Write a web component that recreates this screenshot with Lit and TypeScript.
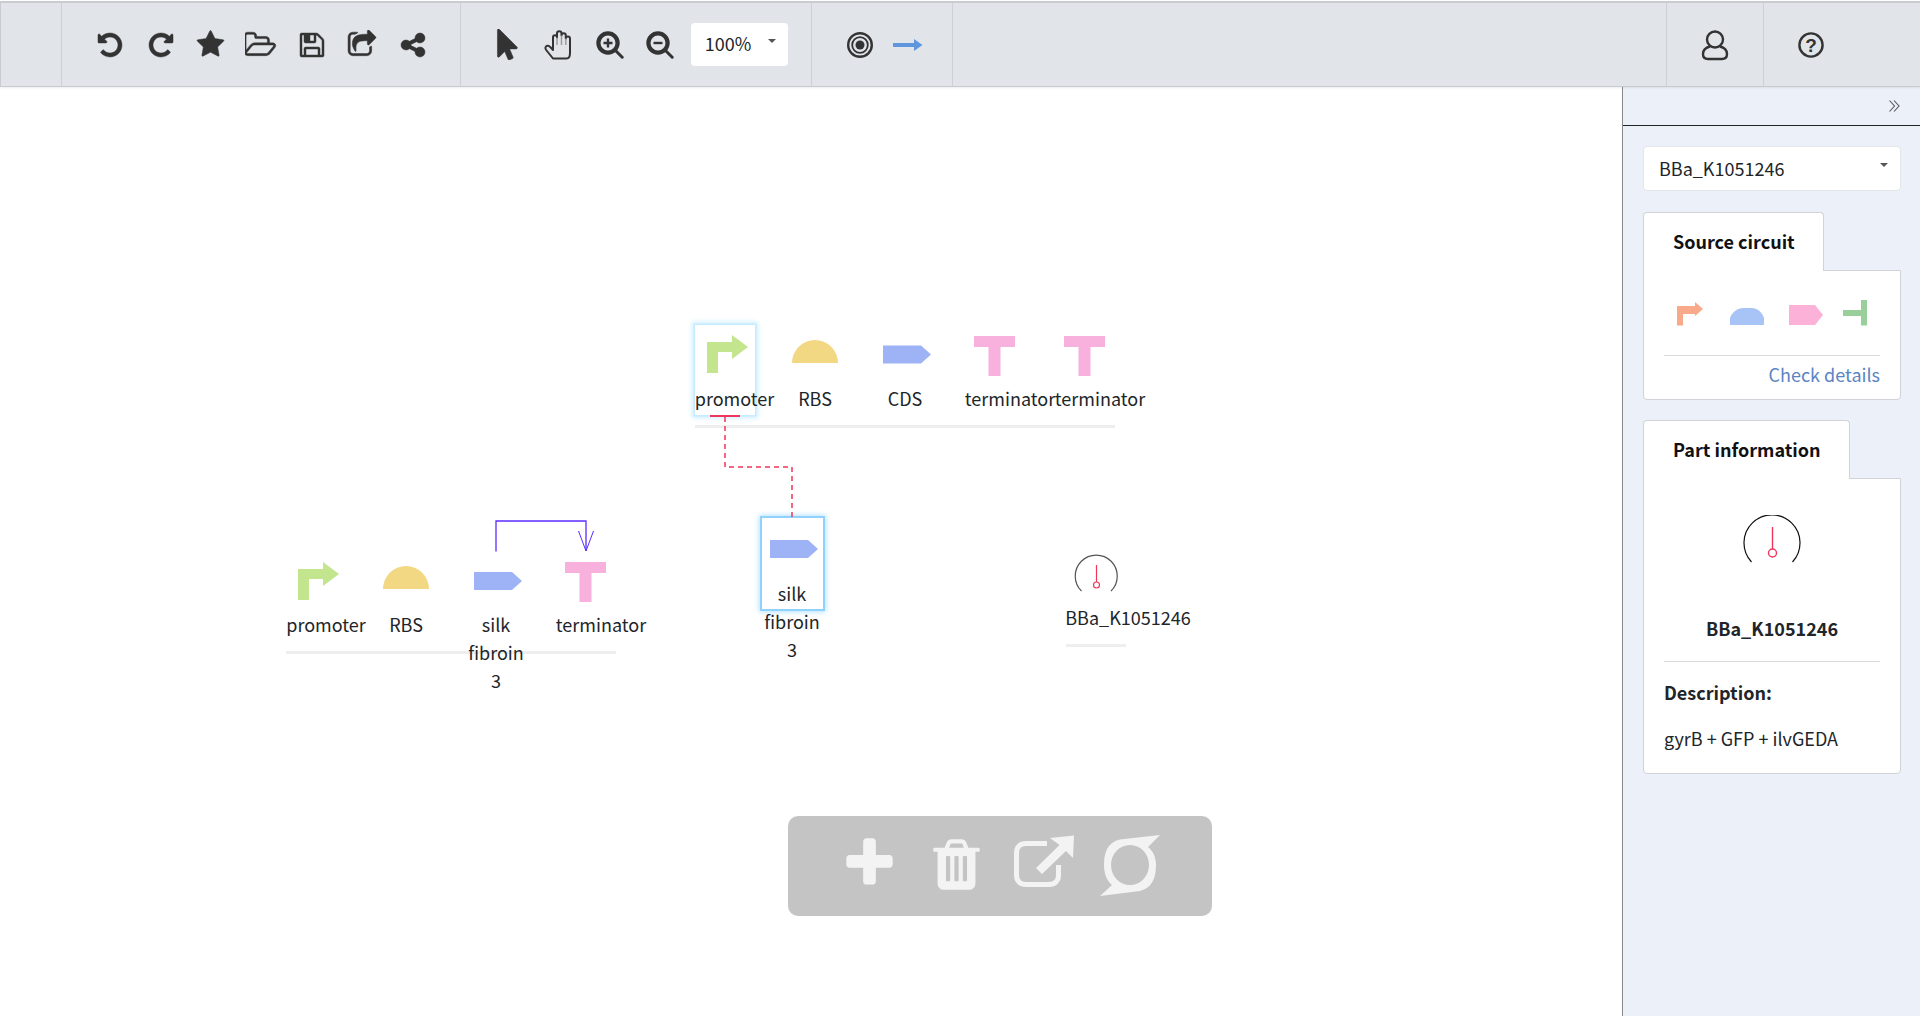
import { LitElement, html, css, svg } from "lit";
import { customElement } from "lit/decorators.js";

const FA = {
  undo: "M1664 896q0 156-61 298t-164 245-245 164-298 61q-172 0-327-72.5t-264-204.5q-9-13-8.5-23.5t9.5-20.5l137-138q10-9 25-9 16 2 23 12 73 95 179 147t225 52q104 0 198.5-40.5t163.5-109.5 109.5-163.5 40.5-198.5-40.5-198.5-109.5-163.5-163.5-109.5-198.5-40.5q-98 0-188 35.5t-160 101.5l137 138q31 30 14 69-17 40-59 40h-448q-26 0-45-19t-19-45v-448q0-42 40-59 39-17 69 14l130 129q107-101 244-156.5t284-55.5q156 0 298 61t245 164 164 245 61 298z",
  star: "M1728 647q0 22-26 48l-363 354 86 500q1 7 1 20 0 21-10.5 35.5t-30.5 14.5q-19 0-40-12l-449-236-449 236q-22 12-40 12-21 0-31.5-14.5t-10.5-35.5q0-6 2-20l86-500-364-354q-25-27-25-48 0-37 56-46l502-73 225-455q19-41 49-41t49 41l225 455 502 73q56 9 56 46z",
  folder: "M1717 931q0-35-53-35h-1088q-40 0-85.5 21.5t-71.5 52.5l-294 363q-18 24-18 40 0 35 53 35h1088q40 0 86-22t71-53l294-363q18-22 18-39zm-1141-163h768v-160q0-40-28-68t-68-28h-576q-40 0-68-28t-28-68v-64q0-40-28-68t-68-28h-320q-40 0-68 28t-28 68v853l256-315q44-53 116-87.5t140-34.5zm1269 163q0 62-46 120l-295 363q-43 53-116 87.5t-140 34.5h-1088q-92 0-158-66t-66-158v-960q0-92 66-158t158-66h320q92 0 158 66t66 158v32h544q92 0 158 66t66 158v160h192q54 0 99 24.5t67 70.5q15 32 15 68z",
  save: "M512 1536h768v-384h-768v384zm896 0h128v-896q0-14-10-38.5t-20-34.5l-281-281q-10-10-34-20t-39-10v416q0 40-28 68t-68 28h-576q-40 0-68-28t-28-68v-416h-128v1280h128v-416q0-40 28-68t68-28h832q40 0 68 28t28 68v416zm-384-928v-320q0-13-9.5-22.5t-22.5-9.5h-192q-13 0-22.5 9.5t-9.5 22.5v320q0 13 9.5 22.5t22.5 9.5h192q13 0 22.5-9.5t9.5-22.5zm640 32v928q0 40-28 68t-68 28h-1344q-40 0-68-28t-28-68v-1344q0-40 28-68t68-28h928q40 0 88 20t76 48l280 280q28 28 48 76t20 88z",
  share: "M1472 989v259q0 119-84.5 203.5t-203.5 84.5h-832q-119 0-203.5-84.5t-84.5-203.5v-832q0-119 84.5-203.5t203.5-84.5h255q13 0 22.5 9.5t9.5 22.5q0 27-26 32-77 26-133 60-10 4-16 4h-112q-66 0-113 47t-47 113v832q0 66 47 113t113 47h832q66 0 113-47t47-113v-214q0-19 18-29 28-13 54-37 16-16 35-8 21 9 21 29zm237-496l-384 384q-18 19-45 19-12 0-25-5-39-17-39-59v-192h-160q-323 0-438 131-119 137-74 473 3 23-20 34-8 2-12 2-16 0-26-13-10-14-21-31t-39.5-68.5-49.5-99.5-38.5-114-17.5-122q0-49 3.5-91t14-90 28-88 47-81.5 68.5-74 94.5-61.5 124.5-48.5 159.5-30.5 196.5-11h160v-192q0-42 39-59 13-5 25-5 26 0 45 19l384 384q19 19 19 45t-19 45z",
  shareAlt: "M1344 1024q133 0 226.5 93.5t93.5 226.5-93.5 226.5-226.5 93.5-226.5-93.5-93.5-226.5q0-12 2-34l-360-180q-92 86-218 86-133 0-226.5-93.5t-93.5-226.5 93.5-226.5 226.5-93.5q126 0 218 86l360-180q-2-22-2-34 0-133 93.5-226.5t226.5-93.5 226.5 93.5 93.5 226.5-93.5 226.5-226.5 93.5q-126 0-218-86l-360 180q2 22 2 34t-2 34l360 180q92-86 218-86z",
  pointer: "M1389 1043q31 30 14 69-17 40-59 40h-382l201 476q10 25 0 49t-34 35l-177 75q-25 10-49 0t-35-34l-191-452-312 312q-19 19-45 19-12 0-24-5-40-17-40-59v-1504q0-42 40-59 12-5 24-5 27 0 45 19z",
  trash: "M704 1376v-704q0-14-9-23t-23-9h-64q-14 0-23 9t-9 23v704q0 14 9 23t23 9h64q14 0 23-9t9-23zm256 0v-704q0-14-9-23t-23-9h-64q-14 0-23 9t-9 23v704q0 14 9 23t23 9h64q14 0 23-9t9-23zm256 0v-704q0-14-9-23t-23-9h-64q-14 0-23 9t-9 23v704q0 14 9 23t23 9h64q14 0 23-9t9-23zm-544-992h448l-48-117q-7-9-17-11h-317q-10 2-17 11zm928 32v64q0 14-9 23t-23 9h-96v948q0 83-47 143.5t-113 60.5h-832q-66 0-113-58.5t-47-141.5v-952h-96q-14 0-23-9t-9-23v-64q0-14 9-23t23-9h309l70-167q15-37 54-63t79-26h320q40 0 79 26t54 63l70 167h309q14 0 23 9t9 23z",
  plus: "M1600 736v192q0 40-28 68t-68 28h-416v416q0 40-28 68t-68 28h-192q-40 0-68-28t-28-68v-416h-416q-40 0-68-28t-28-68v-192q0-40 28-68t68-28h416v-416q0-40 28-68t68-28h192q40 0 68 28t28 68v416h416q40 0 68 28t28 68z",
};

const fa = (d: string, w: number, h: number, mirror = false, vb = "0 0 1792 1792") =>
  html`<svg class="ic ${mirror ? "flip" : ""}" width=${w} height=${h} viewBox=${vb}><path d=${d} fill="#333" stroke="#333" stroke-width="30"/></svg>`;

const zoomIcon = (plus: boolean) => html`<svg class="ic" width="28" height="28" viewBox="0 0 28 28" fill="none" stroke="#333">
  <circle cx="12" cy="12" r="9.6" stroke-width="4.2"/>
  <path d="M19 19l7.2 7.2" stroke-width="3" stroke-linecap="round"/>
  <path d=${plus ? "M7.5 12h9M12 7.5v9" : "M7.5 12h9"} stroke-width="2.4"/></svg>`;

const handIcon = html`<svg class="ic" width="30" height="32" viewBox="0 0 30 32" fill="none" stroke="#333" stroke-width="2" stroke-linejoin="round">
  <path d="M9 29.5 2.2 21c-1.6-2-.4-3.900 1-4.200 1.300-.3 2.400.4 3.300 1.500L9 21V8.500c0-3 4-3 4 0V4.500c0-3 4.500-3 4.500 0v2c0-3 4.300-3 4.300 0v3c0-2.800 4.200-2.800 4.200 0V24c0 3-1 5.500-3.500 5.500z"/>
  <path d="M13 8.500V16M17.500 6.500V16M21.800 9.500V16" stroke="#999" stroke-width="1.400"/></svg>`;

const targetIcon = html`<svg class="ic" width="28" height="28" viewBox="0 0 28 28" fill="none" stroke="#333">
  <circle cx="14" cy="14" r="11.800" stroke-width="2.400"/><circle cx="14" cy="14" r="7.800" stroke-width="1.800"/><circle cx="14" cy="14" r="4.500" fill="#333" stroke="none"/></svg>`;

const blueArrow = html`<svg class="ic" width="30" height="14" viewBox="0 0 30 14"><path d="M0 5h21V1l8.500 6-8.500 6V9H0z" fill="#5f97de"/></svg>`;

const userIcon = html`<svg class="ic" width="28" height="32" viewBox="0 0 28 32" fill="none" stroke="#333" stroke-width="2.400">
  <circle cx="14" cy="10.500" r="8"/><path d="M9 17.500C5 18.500 2 21 2 25c0 3 2 5 5 5h14c3 0 5-2 5-5 0-4-3-6.500-7-7.500"/></svg>`;

const helpIcon = html`<svg class="ic" width="28" height="28" viewBox="0 0 28 28" fill="none">
  <circle cx="14" cy="14" r="11.600" stroke="#333" stroke-width="2.400"/>
  <text x="14" y="20.500" text-anchor="middle" class="qm">?</text></svg>`;

const T = (x: number, y: number) =>
  svg`<path d="M${x} ${y}h41v11h-14.500v29h-12v-29h-14.500z" fill="#f8b0dd"/>`;
const promoter = (x: number, y: number) =>
  svg`<path d="M${x} ${y + 38}v-31h25v-7l16 12-16 12v-7h-14v21z" fill="#c3e58e"/>`;
const rbs = (x: number, y: number) =>
  svg`<path d="M${x} ${y + 23}a23 23 0 0 1 46 0z" fill="#f3d883"/>`;
const cds = (x: number, y: number) =>
  svg`<path d="M${x} ${y}h38l10 9-10 9h-38z" fill="#9db3f5"/>`;

const canvasLabels = [
  { t: "promoter", x: 734.5, y: 398 },
  { t: "RBS", x: 815, y: 398 },
  { t: "CDS", x: 905, y: 398 },
  { t: "terminator", x: 1010, y: 398 },
  { t: "terminator", x: 1100, y: 398 },
  { t: "promoter", x: 326, y: 624 },
  { t: "RBS", x: 406, y: 624 },
  { t: "silk fibroin 3", x: 496, y: 624, wrap: true },
  { t: "terminator", x: 601, y: 624 },
  { t: "silk fibroin 3", x: 792, y: 593, wrap: true },
  { t: "BBa_K1051246", x: 1128, y: 617 },
];

@customElement("app-root")
export class AppRoot extends LitElement {
  static styles = css`
    :host { display: block; width: 1920px; height: 1016px; overflow: hidden; position: relative;
      font-family: "Noto Sans CJK SC", "Noto Sans", sans-serif; font-size: 18px; color: #212529; background: #fff; }
    * { box-sizing: border-box; }
    .ic { display: block; flex: none; }
    .flip { transform: scaleX(-1); }
    .qm { font: bold 19px "Liberation Sans", sans-serif; fill: #333; }
    .toolbar { display: flex; height: 86px; margin-top: 1px; background: #e1e5e9; border: 1px solid #c8ccd1; border-width: 2px 0 1.500px 1px; box-shadow: 0 1px 2px rgba(0,0,0,.08); position: relative; z-index: 2; }
    .sec { display: flex; align-items: center; border-right: 1px solid #cdd1d6; height: 100%; flex: none; }
    .s1 { width: 61px; }
    .s2 { width: 399px; padding-left: 23px; }
    .s3 { width: 351px; padding-left: 22px; }
    .s4 { width: 141px; padding-left: 34px; gap: 19px; }
    .spacer { flex: 1; border-right: 1px solid #cdd1d6; height: 100%; }
    .s5 { width: 97px; justify-content: center; }
    .s6 { width: 156px; padding-left: 33px; border-right: 0; }
    .cell { width: 50.700px; display: flex; justify-content: center; align-items: center; }
    .s2 .cell { width: 50.400px; }
    .sel { position: relative; background: #fff; border-radius: 4px; }
    .sel::after { content: ""; position: absolute; border: 4.500px solid transparent; border-top-color: #555; border-bottom: 0; }
    .zoomsel { width: 97px; height: 43px; margin-left: 5px; padding-left: 14px; line-height: 41px; font-size: 18px; }
    .zoomsel::after { right: 12px; top: 16px; }
    .main { display: flex; height: 929px; }
    .canvas { width: 1622px; position: relative; overflow: hidden; }
    .canvas-svg { position: absolute; left: 0; top: 0; }
    .box { position: absolute; background: #fff; }
    .box.a { left: 695px; top: 238px; width: 60px; height: 90px; box-shadow: 0 0 0 1.500px #c8ecff, 0 0 5px 3px #cdeeff; }
    .box.b { left: 762px; top: 431px; width: 61px; height: 91px; box-shadow: 0 0 0 2px #8fd2fb, 0 0 5px 3px #b4e2fd; }
    .lbl { position: absolute; transform: translateX(-50%); line-height: 28px; white-space: nowrap; text-align: center; }
    .lbl.wrap { width: 62px; white-space: normal; }
    .float { position: absolute; left: 788px; top: 729px; width: 424px; height: 100px; border-radius: 10px; background: #c4c4c4; }
    .side { width: 298px; background: #ebf0f9; border-left: 1px solid #888; display: flex; flex-direction: column; }
    .side-head { height: 39px; border-bottom: 1px solid #222; display: flex; justify-content: flex-end; align-items: center; padding: 0 20px 0 0; flex: none; }
    .side-body { padding: 20px 19px 0 20px; display: flex; flex-direction: column; }
    .picker { height: 45px; line-height: 42px; padding-left: 15px; border: 1px solid #e3e6ea; font-size: 18px; }
    .picker::after { right: 12px; top: 16px; }
    .card { display: flex; flex-direction: column; align-items: flex-start; }
    .tab { background: #fff; border: 1px solid #d0d3d8; border-bottom: 0; border-radius: 4px 4px 0 0; height: 59px; margin-bottom: -1px; padding: 0 0 0 29px; line-height: 57px; font-weight: 700; color: #111; position: relative; z-index: 1; white-space: nowrap; }
    .body { width: 100%; background: #fff; border: 1px solid #d0d3d8; border-radius: 0 0 4px 4px; padding: 0 20px; }
    .c1 { margin-top: 21px; }
    .c1 .tab { width: 181px; }
    .c1 .body { height: 130px; }
    .c2 { margin-top: 20px; }
    .c2 .tab { width: 207px; }
    .c2 .body { height: 296px; }
    .glyphs { display: flex; height: 84px; margin: 0 -7px; padding-top: 29px; }
    .rule { height: 1px; background: #d9dbdf; }
    .link { color: #5b84c4; text-align: right; line-height: 28px; margin-top: 4px; }
    .gauge { display: flex; justify-content: center; padding-top: 36px; height: 135px; }
    .pname { font-weight: 700; text-align: center; line-height: 28px; height: 47px; }
    .h { font-weight: 700; line-height: 28px; margin-top: 16px; }
    .desc { line-height: 28px; margin-top: 18px; }
  `;

  render() {
    return html`
      <div class="toolbar">
        <div class="sec s1"></div>
        <div class="sec s2">
          <div class="cell">${fa(FA.undo, 28, 28)}</div>
          <div class="cell">${fa(FA.undo, 28, 28, true)}</div>
          <div class="cell">${fa(FA.star, 29, 29)}</div>
          <div class="cell">${fa(FA.folder, 32, 30, false, "0 0 1920 1792")}</div>
          <div class="cell">${fa(FA.save, 28, 28)}</div>
          <div class="cell">${fa(FA.share, 30, 30)}</div>
          <div class="cell">${fa(FA.shareAlt, 28, 28)}</div>
        </div>
        <div class="sec s3">
          <div class="cell">${fa(FA.pointer, 31, 31)}</div>
          <div class="cell">${handIcon}</div>
          <div class="cell">${zoomIcon(true)}</div>
          <div class="cell">${zoomIcon(false)}</div>
          <div class="sel zoomsel">100%</div>
        </div>
        <div class="sec s4">${targetIcon}${blueArrow}</div>
        <div class="spacer"></div>
        <div class="sec s5">${userIcon}</div>
        <div class="sec s6">${helpIcon}</div>
      </div>
      <div class="main">
        <div class="canvas">
          <div class="box a"></div>
          <div class="box b"></div>
          <svg class="canvas-svg" width="1622" height="929" viewBox="0 87 1622 929" fill="none">
            ${promoter(707, 335)}${rbs(792, 340)}${cds(883, 345.5)}${T(974, 336)}${T(1064, 336)}
            <rect x="695" y="425" width="420" height="3" fill="#eee"/>
            <rect x="710" y="415" width="30" height="2" fill="#f2355b"/>
            <path d="M725 417V467H792V518" stroke="#f2355b" stroke-width="1.500" stroke-dasharray="5 4"/>
            ${promoter(298, 562)}${rbs(383, 566)}${cds(474, 572)}${T(565, 562)}
            <rect x="286" y="651" width="330" height="3" fill="#eee"/>
            <path d="M496 551.500V521H586V551" stroke="#5b2cff" stroke-width="1.300"/>
            <path d="M578.500 531 586 551 593.500 531" stroke="#5b2cff" stroke-width="1"/>
            ${cds(770, 540)}
            <path d="M1081.500 591A21 21 0 1 1 1111 591" stroke="#555" stroke-width="1.200"/>
            <path d="M1096.500 565V582" stroke="#f2355b" stroke-width="1.200"/>
            <circle cx="1096.500" cy="585" r="3" stroke="#f2355b" stroke-width="1.200"/>
            <rect x="1066" y="644" width="60" height="3" fill="#eee"/>
          </svg>
          ${canvasLabels.map(
            (l) => html`<div class="lbl ${l.wrap ? "wrap" : ""}" style="left:${l.x}px;top:${l.y - 14 - 87}px">${l.t}</div>`
          )}
          <div class="float">
            <svg width="424" height="100" viewBox="788 816 424 100">
              <svg x="840" y="834" width="59" height="59" viewBox="0 0 1792 1792"><path d=${FA.plus} fill="#f3f3f3"/></svg>
              <svg x="927" y="835" width="59" height="59" viewBox="0 0 1792 1792"><path d=${FA.trash} fill="#f3f3f3"/></svg>
              <path d="M1047 843.500H1026C1020 843.500 1016.500 847 1016.500 853V875C1016.500 881 1020 884.500 1026 884.500H1049C1055 884.500 1058.500 881 1058.500 875V865" stroke="#f3f3f3" stroke-width="5" fill="none"/>
              <path d="M1050 838 1074 835.500 1073 858 1066 851 1042 874 1036 868 1059.500 845z" fill="#f3f3f3"/>
              <path fill-rule="evenodd" fill="#f3f3f3" d="M1160 835 1120 839.500C1108 842 1104 852 1104 865C1104 875 1108 882 1112 885L1100 896 1140 891C1152 888 1156 878 1156 865C1156 857 1153 851 1148 847ZM1130 845A19 20 0 1 1 1130 885A19 20 0 1 1 1130 845Z"/>
            </svg>
          </div>
        </div>
        <div class="side">
          <div class="side-head">
            <svg width="11" height="12" viewBox="0 0 11 12" fill="none" stroke="#555" stroke-width="1.100"><path d="M.5 .5 5.500 6 .5 11.500M5 .5 10 6 5 11.500"/></svg>
          </div>
          <div class="side-body">
            <div class="sel picker">BBa_K1051246</div>
            <div class="card c1">
              <div class="tab">Source circuit</div>
              <div class="body">
                <div class="glyphs">
                  <svg width="216" height="36" viewBox="1657 300 216 36">
                    <path d="M1677 325.500V306H1695V302L1703 309 1695 316V314H1683V325.500z" fill="#f8a98a"/>
                    <path d="M1730 325V318C1732 312 1738 308 1743 308H1752C1757 308 1762 312 1764 318V325z" fill="#a8c3f6"/>
                    <path d="M1789 305H1815L1823 315 1815 325H1789z" fill="#fcb2d8"/>
                    <path d="M1861 300H1867V325.500H1861V316H1843V310H1861z" fill="#98cf9a"/>
                  </svg>
                </div>
                <div class="rule"></div>
                <div class="link">Check details</div>
              </div>
            </div>
            <div class="card c2">
              <div class="tab">Part information</div>
              <div class="body">
                <div class="gauge">
                  <svg width="58" height="48" viewBox="1743 515 58 48" fill="none">
                    <path d="M1751.500 562A28 28 0 1 1 1792.500 562" stroke="#111" stroke-width="1.200"/>
                    <path d="M1772.500 527V549" stroke="#f2355b" stroke-width="1.400"/>
                    <circle cx="1772.500" cy="553" r="4" stroke="#f2355b" stroke-width="1.400"/>
                  </svg>
                </div>
                <div class="pname">BBa_K1051246</div>
                <div class="rule"></div>
                <div class="h">Description:</div>
                <div class="desc">gyrB + GFP + ilvGEDA</div>
              </div>
            </div>
          </div>
        </div>
      </div>
    `;
  }
}
